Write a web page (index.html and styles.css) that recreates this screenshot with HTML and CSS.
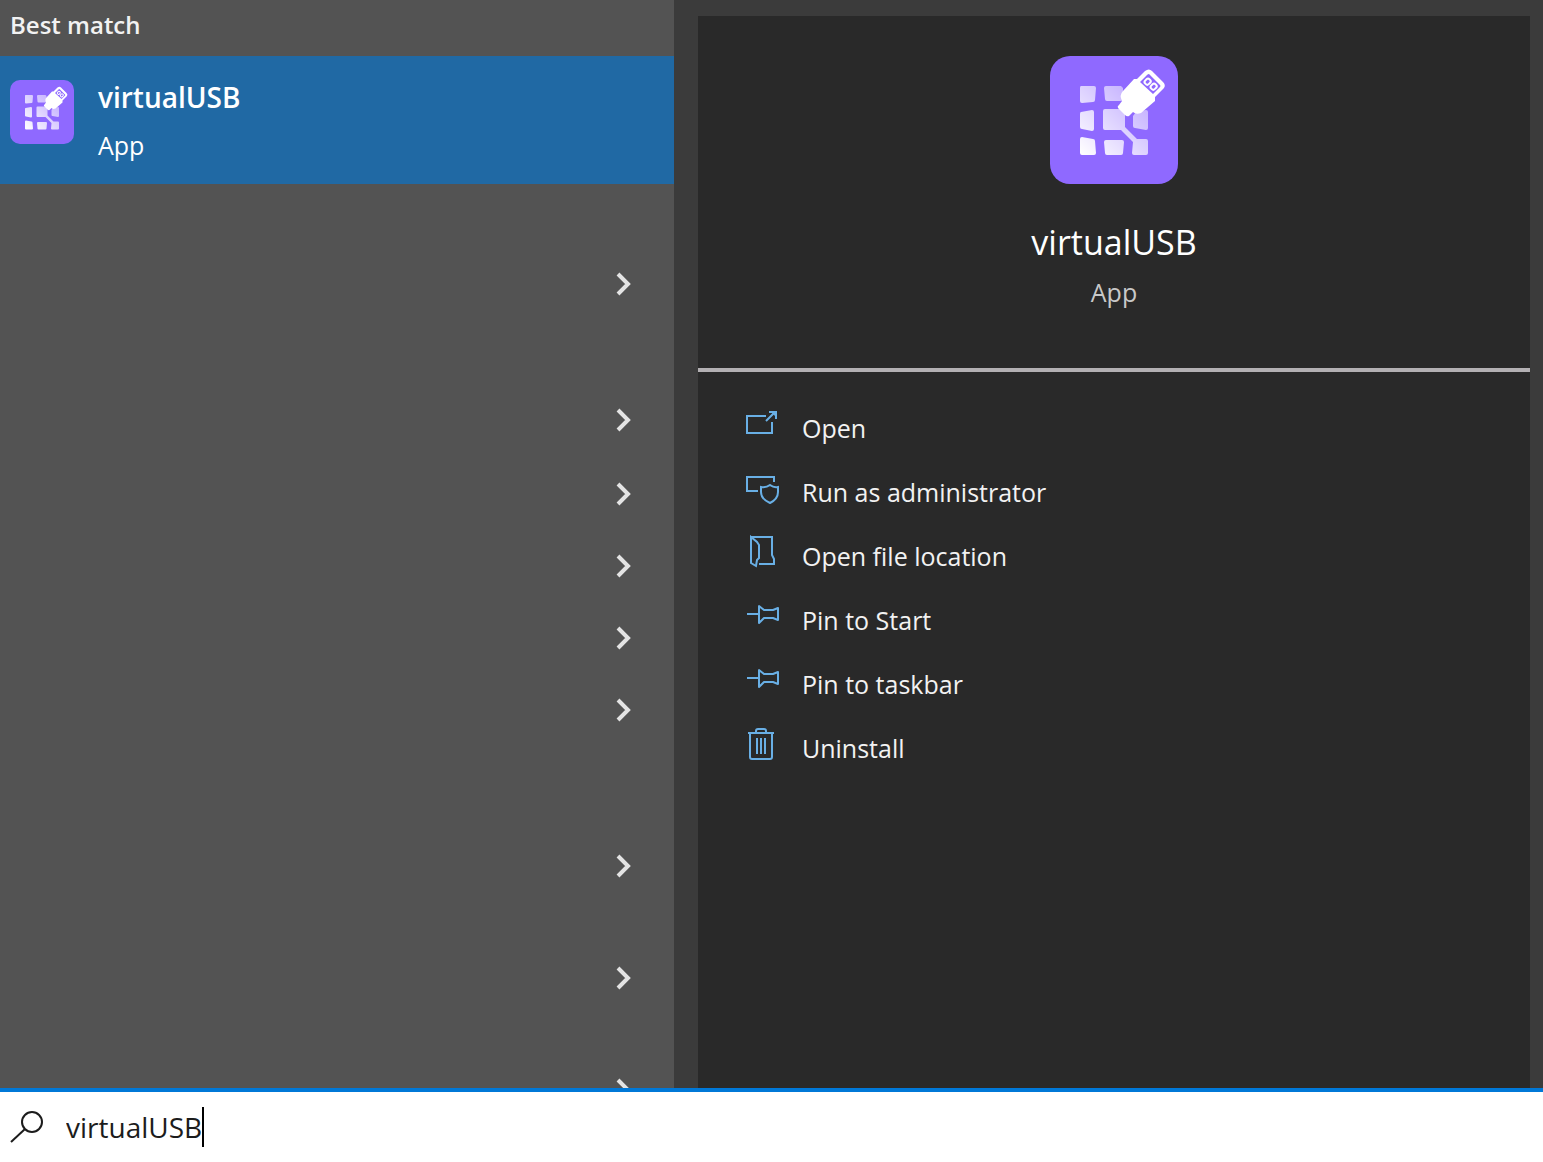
FILE: index.html
```html
<!DOCTYPE html>
<html lang="en">
<head>
<meta charset="utf-8">
<meta name="viewport" content="width=device-width, initial-scale=1">
<title>Search</title>
<link rel="stylesheet" href="styles.css">
</head>
<body>
<svg class="defs" aria-hidden="true">
  <defs>
    <linearGradient id="tiles" gradientUnits="userSpaceOnUse" x1="30" y1="98" x2="98" y2="30">
      <stop offset="0" stop-color="#fff"/>
      <stop offset="1" stop-color="#fff" stop-opacity=".4"/>
    </linearGradient>
    <symbol id="app-logo" viewBox="0 0 128 128">
      <rect width="128" height="128" rx="20" fill="#8f69ff"/>
      <g fill="url(#tiles)">
        <path d="M31 30h13q2 0 2 2l-1 12q0 2-2 2l-11 1q-2 0-2-2V32q0-2 1-2z"/>
        <path d="M56 30h15l2 2v12q-1 1-3 1H57q-2 0-2-2l-1-11q0-2 2-2z"/>
        <path d="M31 56l11-2q2 0 2 2v17q0 2-2 2l-10-2q-2 0-2-2V58q0-2 1-2z"/>
        <path d="M55 53h18q2 1 2 3v15l12 12h9q2 0 2 2v12q0 2-2 2H84q-2 0-2-2l1-11-12-12H55q-2 0-2-2V55q0-2 2-2z"/>
        <path d="M86 56l10-2q2 0 2 2v16q0 2-2 2l-11-2q-2 0-2-2V60z"/>
        <path d="M32 81l11 2q2 0 2 2l1 12q0 2-2 2H32q-2 0-2-2V83q0-2 2-2z"/>
        <path d="M56 84h16q2 0 2 2l-1 11q0 2-2 2H57q-2 0-2-2l-1-11q0-2 2-2z"/>
      </g>
      <path fill="#fff" fill-rule="evenodd" d="M84 23l3 0 8-8q4-3 7 0l11 11q3 3 1 6l-9 9v4L91 57q-5 2-8-1l-4 4q-2 1-4-1l-7-7q-1-2 1-3l3-4q-3-6 1-10zM99 18q-1 0-2 1l-7 7 13 12 7-7q1-1 0-2l-10-10z"/>
      <g fill="none" stroke="#fff" stroke-width="2">
        <rect x="-3" y="-3" width="5" height="6" rx="2" transform="translate(98 26) rotate(45)"/>
        <rect x="-3" y="-3" width="5" height="6" rx="2" transform="translate(104 31) rotate(45)"/>
      </g>
    </symbol>
    <symbol id="chevron" viewBox="0 0 16 24">
      <path d="M2 2l10 10L2 22" fill="none" stroke="currentColor" stroke-width="4"/>
    </symbol>
    <symbol id="pin" viewBox="0 0 34 34">
      <path d="M1 15h12M13 7v17l5-5h9l5 2V9l-5 2h-9z" fill="none" stroke="currentColor" stroke-width="2" stroke-linejoin="round"/>
    </symbol>
  </defs>
</svg>

<main class="panes">
  <section class="results" aria-label="Results">
    <h2 class="heading">Best match</h2>
    <button class="best" type="button">
      <svg class="best-logo" aria-hidden="true"><use href="#app-logo"/></svg>
      <span class="best-text"><strong class="best-name">virtualUSB</strong><span>App</span></span>
    </button>
    <div class="groups">
      <div class="group"><button class="row" type="button" aria-label="Show more"><svg class="chevron"><use href="#chevron"/></svg></button></div>
      <div class="group">
        <button class="row" type="button" aria-label="Show more"><svg class="chevron"><use href="#chevron"/></svg></button>
        <button class="row" type="button" aria-label="Show more"><svg class="chevron"><use href="#chevron"/></svg></button>
        <button class="row" type="button" aria-label="Show more"><svg class="chevron"><use href="#chevron"/></svg></button>
        <button class="row" type="button" aria-label="Show more"><svg class="chevron"><use href="#chevron"/></svg></button>
        <button class="row" type="button" aria-label="Show more"><svg class="chevron"><use href="#chevron"/></svg></button>
      </div>
      <div class="group wide"><button class="row" type="button" aria-label="Show more"><svg class="chevron"><use href="#chevron"/></svg></button></div>
      <div class="group tight"><button class="row" type="button" aria-label="Show more"><svg class="chevron"><use href="#chevron"/></svg></button></div>
      <div class="group tight"><button class="row" type="button" aria-label="Show more"><svg class="chevron"><use href="#chevron"/></svg></button></div>
    </div>
  </section>

  <section class="preview">
    <div class="card">
      <header class="summary">
        <svg class="logo" aria-hidden="true"><use href="#app-logo"/></svg>
        <h1 class="name">virtualUSB</h1>
        <p class="kind">App</p>
      </header>
      <div class="actions">
        <button class="action" type="button">
          <svg class="icon" viewBox="0 0 34 34" aria-hidden="true"><path d="M20 9H1v17h25V15M20 14l9-9M23 5h7v7" fill="none" stroke="currentColor" stroke-width="2"/><path d="M24 4h7v7z" fill="currentColor"/></svg>
          <span>Open</span>
        </button>
        <button class="action" type="button">
          <svg class="icon" viewBox="0 0 34 34" aria-hidden="true"><path d="M28 11V6H1v14h11M24 14q4 3 8 2v5q0 7-8 11-9-4-9-11v-5q5 1 9-2z" fill="none" stroke="currentColor" stroke-width="2"/></svg>
          <span>Run as administrator</span>
        </button>
        <button class="action" type="button">
          <svg class="icon" viewBox="0 0 34 34" aria-hidden="true"><path d="M5 2h21v18l2 4v5H13M5 2v26l5 3 1-6 2-2V10l-2-3z" fill="none" stroke="currentColor" stroke-width="2"/></svg>
          <span>Open file location</span>
        </button>
        <button class="action" type="button">
          <svg class="icon" aria-hidden="true"><use href="#pin"/></svg>
          <span>Pin to Start</span>
        </button>
        <button class="action" type="button">
          <svg class="icon" aria-hidden="true"><use href="#pin"/></svg>
          <span>Pin to taskbar</span>
        </button>
        <button class="action" type="button">
          <svg class="icon" viewBox="0 0 34 34" aria-hidden="true"><path d="M2 6h26M4 6v24q0 2 2 2h18q2 0 2-2V6M10 6V4q0-2 2-2h6q2 0 2 2v2M11 11v16M15 11v16M19 11v16" fill="none" stroke="currentColor" stroke-width="2"/></svg>
          <span>Uninstall</span>
        </button>
      </div>
    </div>
  </section>
</main>

<form class="search" role="search">
  <label class="search-label" for="query" aria-label="Search">
    <svg class="glass" viewBox="0 0 34 34" aria-hidden="true"><circle cx="22" cy="12" r="10" fill="none" stroke="currentColor" stroke-width="2"/><path d="M15 19L1 32" stroke="currentColor" stroke-width="2"/></svg>
  </label>
  <input class="query" id="query" type="text" value="virtualUSB" autocomplete="off" spellcheck="false">
  <span class="caret"></span>
</form>
</body>
</html>
```

FILE: styles.css
```css
* {
  box-sizing: border-box;
}

body {
  margin: 0;
  height: 100vh;
  display: flex;
  flex-direction: column;
  background: #3b3b3b;
  color: #f2f2f2;
  font: 25px/32px "Open Sans", "Noto Sans", sans-serif;
}

button {
  border: 0;
  padding: 0;
  background: none;
  color: inherit;
  font: inherit;
  text-align: left;
}

.defs {
  position: absolute;
  width: 0;
  height: 0;
}

.panes {
  flex: 1;
  min-height: 0;
  display: grid;
  grid-template-columns: minmax(0, 674fr) minmax(0, 869fr);
}

.results {
  display: flex;
  flex-direction: column;
  min-height: 0;
  overflow: hidden;
  background: #535353;
}

.heading {
  flex: none;
  margin: 0;
  padding: 9px 10px 15px;
  font-size: 24px;
  font-weight: 600;
}

.best {
  flex: none;
  display: flex;
  align-items: center;
  gap: 24px;
  height: 128px;
  padding: 0 10px;
  background: #2069a4;
  color: #fff;
}

.best-logo {
  width: 64px;
  height: 64px;
  margin-bottom: 16px;
}

.best-text {
  display: flex;
  flex-direction: column;
  gap: 16px;
  padding-top: 2px;
}

.best-name {
  font-size: 28px;
  font-weight: 600;
}

.groups {
  flex: 1;
  min-height: 0;
  overflow: hidden;
}

.group {
  margin-top: 64px;
}

.group.wide {
  margin-top: 84px;
}

.group.tight {
  margin-top: 40px;
}

.row {
  display: flex;
  align-items: center;
  justify-content: flex-end;
  width: 100%;
  height: 72px;
  padding-right: 42px;
  color: #e4e4e4;
}

.row:first-child:not(:last-child) {
  margin-bottom: 2px;
}

.chevron {
  width: 16px;
  height: 24px;
}

.preview {
  display: flex;
  min-height: 0;
  padding: 16px 13px 0 24px;
}

.card {
  flex: 1;
  background: #292929;
}

.summary {
  display: flex;
  flex-direction: column;
  align-items: center;
  padding: 40px 0 60px;
  border-bottom: 4px solid #b3b0b3;
}

.logo {
  width: 128px;
  height: 128px;
}

.name {
  margin: 36px 0 12px;
  font-size: 34px;
  font-weight: 400;
  line-height: 44px;
  color: #fff;
}

.kind {
  margin: 0;
  color: #c8c8c8;
}

.actions {
  display: flex;
  flex-direction: column;
  padding: 24px 0 0 48px;
}

.action {
  display: flex;
  align-items: center;
  gap: 22px;
  height: 64px;
}

.icon {
  width: 34px;
  height: 34px;
  margin-bottom: 8px;
  color: #69afe5;
}

.search {
  flex: none;
  display: flex;
  align-items: center;
  height: 74px;
  padding: 0 10px;
  border-top: 4px solid #0078d7;
  background: #fff;
  color: #1c1c1c;
}

.search-label,
.glass {
  display: block;
  width: 34px;
  height: 34px;
}

.query {
  field-sizing: content;
  margin-left: 22px;
  padding: 0;
  border: 0;
  outline: 0;
  background: none;
  color: inherit;
  font: inherit;
  font-size: 28px;
  line-height: 40px;
}

.caret {
  width: 2px;
  height: 40px;
  background: #000;
}
```
